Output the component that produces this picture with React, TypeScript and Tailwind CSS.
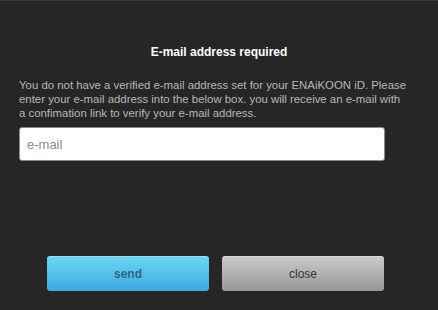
export default function App() {
  const font = { fontFamily: '"Liberation Sans", Arial, sans-serif' };
  return (
    <div
      className="w-[438px] h-[310px] bg-[#262626] border-t border-[#3a3a3a] flex flex-col"
      style={font}
    >
      <div className="pt-[43px] text-center text-white font-bold text-[12px] leading-[16px]">
        E-mail address required
      </div>
      <div className="pl-[19px] pt-[18px] text-[#b8b8b8] text-[11.4px] leading-[14px]">
        <div className="whitespace-nowrap">You do not have a verified e-mail address set for your ENAiKOON iD. Please</div>
        <div className="whitespace-nowrap">enter your e-mail address into the below box. you will receive an e-mail with</div>
        <div className="whitespace-nowrap">a confimation link to verify your e-mail address.</div>
      </div>
      <div className="pl-[19px] pt-[7px]">
        <input
          placeholder="e-mail"
          className="w-[366px] h-[34px] bg-white rounded-[3px] border border-[#8a8a8a] px-[7px] text-[13px] text-[#333] placeholder:text-[#8a8a9a] outline-none"
          style={font}
        />
      </div>
      <div className="flex gap-[13px] pl-[47px] pt-[95px]">
        <button className="w-[162px] h-[35px] rounded-[3px] bg-gradient-to-b from-[#6ad5f3] to-[#3ea9e3] border-t border-[#8fe3f8] text-[#2b6884] font-bold text-[12px]">
          send
        </button>
        <button className="w-[162px] h-[35px] rounded-[3px] bg-gradient-to-b from-[#c9c9c9] to-[#989898] border-t border-[#dadada] text-[#333] text-[12px]">
          close
        </button>
      </div>
    </div>
  );
}
